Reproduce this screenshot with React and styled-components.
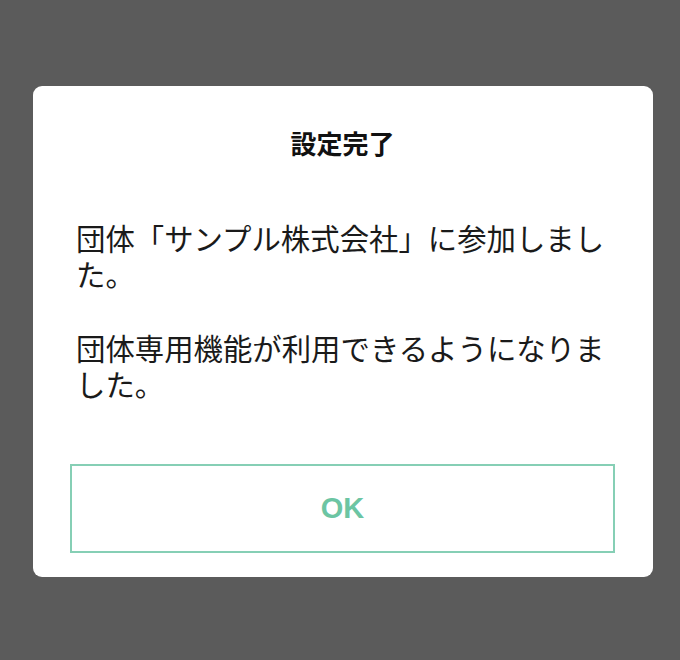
import React from "react";
import styled, { createGlobalStyle } from "styled-components";

const Global = createGlobalStyle`
  html, body { margin: 0; padding: 0; background: #5b5b5b; }
  #root { width: 680px; height: 660px; }
`;

const Overlay = styled.div`
  width: 680px;
  height: 660px;
  background: #5b5b5b;
  display: flex;
  align-items: flex-start;
  justify-content: flex-start;
  padding: 86px 0 0 33px;
  box-sizing: border-box;
`;

const Dialog = styled.div`
  width: 620px;
  height: 491px;
  background: #ffffff;
  border-radius: 9px;
  box-sizing: border-box;
  padding: 38px 38px 24px 37px;
  display: flex;
  flex-direction: column;
  font-family: "Noto Sans CJK JP", "Noto Sans", sans-serif;
  color: #1a1a1a;
`;

const Title = styled.h1`
  margin: 0;
  font-size: 26px;
  line-height: 38px;
  font-weight: 700;
  text-align: center;
  color: #111;
`;

const Body = styled.div`
  margin: 57px 0 0 6px;
  width: 536px;
  font-size: 29.4px;
  line-height: 36px;
  font-weight: 400;
  color: #1a1a1a;
`;

const Paragraph = styled.p`
  margin: 0 0 ${(p) => (p.$last ? 0 : 38)}px 0;
`;

const Button = styled.button`
  margin-top: auto;
  width: 545px;
  height: 89px;
  box-sizing: border-box;
  background: #fff;
  border: 2px solid #86cfb5;
  color: #6cc5a3;
  font-family: "Liberation Sans", Arial, sans-serif;
  font-weight: 700;
  font-size: 29px;
  padding: 0;
  cursor: pointer;
`;

export default function App() {
  return (
    <>
      <Global />
      <Overlay>
        <Dialog>
          <Title>設定完了</Title>
          <Body>
            <Paragraph>団体「サンプル株式会社」に参加しました。</Paragraph>
            <Paragraph $last>団体専用機能が利用できるようになりました。</Paragraph>
          </Body>
          <Button>OK</Button>
        </Dialog>
      </Overlay>
    </>
  );
}
